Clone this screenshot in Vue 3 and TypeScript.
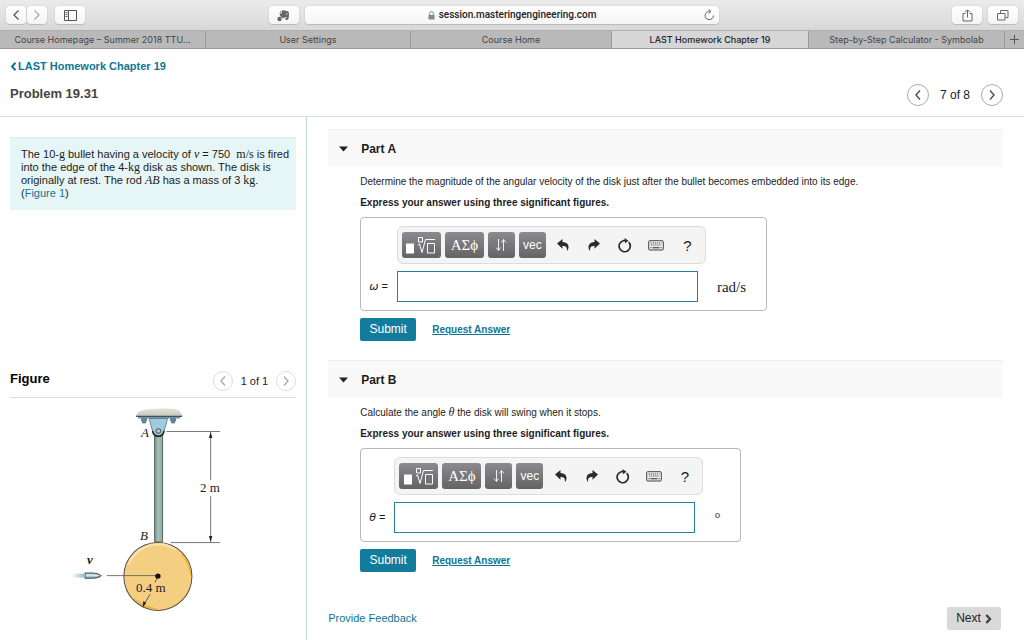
<script setup lang="ts">
import { ref } from 'vue'

interface Tab { title: string; share: number; active?: boolean }
interface Part {
  id: string
  title: string
  before: string
  symbol: string
  after: string
  variable: string
  unit: string
}

const tabs: Tab[] = [
  { title: 'Course Homepage – Summer 2018 TTU...', share: 206 },
  { title: 'User Settings', share: 205 },
  { title: 'Course Home', share: 201 },
  { title: 'LAST Homework Chapter 19', share: 197, active: true },
  { title: 'Step-by-Step Calculator - Symbolab', share: 196 },
]

const parts: Part[] = [
  {
    id: 'a',
    title: 'Part A',
    before: 'Determine the magnitude of the angular velocity of the disk just after the bullet becomes embedded into its edge.',
    symbol: '',
    after: '',
    variable: 'ω',
    unit: 'rad/s',
  },
  {
    id: 'b',
    title: 'Part B',
    before: 'Calculate the angle ',
    symbol: 'θ',
    after: ' the disk will swing when it stops.',
    variable: 'θ',
    unit: '°',
  },
]

const answers = ref<Record<string, string>>({ a: '', b: '' })
</script>

<template>
  <div class="window">
    <div class="toolbar">
      <div class="tools">
        <div class="pair">
          <button class="tool small" aria-label="Back">
            <svg width="8" height="12" viewBox="0 0 8 12"><path d="M6.500 1.500 2 6l4.500 4.500" fill="none" stroke="#555" stroke-width="1.300" /></svg>
          </button>
          <button class="tool small" aria-label="Forward">
            <svg width="8" height="12" viewBox="0 0 8 12"><path d="M1.500 1.500 6 6l-4.500 4.500" fill="none" stroke="#aaa" stroke-width="1.300" /></svg>
          </button>
        </div>
        <button class="tool" aria-label="Sidebar">
          <svg width="13" height="11" viewBox="0 0 13 11"><path d="M.5.5h12v10H.5zM4.500.5v10M1.500 2.500h2M1.500 4.500h2M1.500 6.500h2" fill="none" stroke="#555" /></svg>
        </button>
        <button class="tool clip" aria-label="Web clipper">
          <svg width="13" height="13" viewBox="0 0 13 13"><path d="M5 1.200h1.500c1 0 1.500.6 2.500.7 1.800 0 2.700.6 2.900 2 .2 2.100 0 4.700-.7 6.300-.4.9-2 1-2.700.4-.6-.6-.3-1.700.6-1.900l.9-.1c-.8-.7-1.600-.5-2.200-.4-.3.9-1 1.100-1.900.9C4 8.800 3 7 2.500 4.500L5 4.200z" fill="#666" /><path d="M4.300 1.500v2H2.400z" fill="#666" /><circle cx="9.700" cy="5" r=".7" fill="#f7f7f7" /><circle cx="2.500" cy="10" r="2.200" fill="#666" /></svg>
        </button>
      </div>
      <div class="address">
        <span class="host">
          <svg width="7" height="9" viewBox="0 0 7 9"><path d="M.5 4h6v4.500h-6z" fill="#888" /><path d="M1.600 4V2.500a1.900 1.900 0 0 1 3.800 0V4" fill="none" stroke="#888" /></svg>
          session.masteringengineering.com
        </span>
        <button class="reload" aria-label="Reload">
          <svg width="11" height="12" viewBox="0 0 11 12"><path d="M9.500 6.500A4.200 4.200 0 1 1 6 2.300M4.500 0l2.500 2.400-2.500 2.300" fill="none" stroke="#666" /></svg>
        </button>
      </div>
      <div class="tools end">
        <button class="tool" aria-label="Share">
          <svg width="11" height="13" viewBox="0 0 11 13"><path d="M3.500 4.500h-2.500v7.500h9V4.500H7.500M5.500 8.500V1M3 3.300 5.500.8 8 3.300" fill="none" stroke="#666" /></svg>
        </button>
        <button class="tool" aria-label="Show tabs">
          <svg width="12" height="11" viewBox="0 0 12 11"><path d="M3.500 3V.5h7.500v7H8.500M.5 3.500h7.500v6.500H.5z" fill="none" stroke="#666" /></svg>
        </button>
      </div>
    </div>

    <nav class="tabs" aria-label="Tabs">
      <button v-for="tab in tabs" :key="tab.title" class="tab" :class="{ active: tab.active }" :style="{ flexGrow: tab.share }">{{ tab.title }}</button>
      <button class="add" aria-label="New tab">
        <svg width="9" height="9" viewBox="0 0 9 9"><path d="M4.500 0v9M0 4.500h9" stroke="#555" /></svg>
      </button>
    </nav>

    <header class="head">
      <div>
        <a href="#" class="back"><svg width="7" height="9" viewBox="0 0 7 9"><path d="M5.500.8 2 4.500l3.500 3.700" fill="none" stroke="#0f7596" stroke-width="2" /></svg>LAST Homework Chapter 19</a>
        <h1>Problem 19.31</h1>
      </div>
      <div class="pager">
        <button class="round" aria-label="Previous problem"><svg width="8" height="12" viewBox="0 0 8 12"><path d="M6 1.500 2 6l4 4.500" fill="none" stroke="#555" stroke-width="1.500" /></svg></button>
        <span>7 of 8</span>
        <button class="round" aria-label="Next problem"><svg width="8" height="12" viewBox="0 0 8 12"><path d="M2 1.500 6 6l-4 4.500" fill="none" stroke="#555" stroke-width="1.500" /></svg></button>
      </div>
    </header>

    <div class="body">
      <aside class="side">
        <p class="problem">
          The 10-<span class="tex">g</span> bullet having a velocity of <i class="tex">v</i> = 750 &nbsp;<span class="tex">m/s</span> is fired<br>
          into the edge of the 4-<span class="tex">kg</span> disk as shown. The disk is<br>
          originally at rest. The rod <i class="tex">AB</i> has a mass of 3 <span class="tex">kg</span>.<br>
          (<a href="#figure">Figure 1</a>)
        </p>
        <section id="figure" class="figure">
          <div class="figure-head">
            <h2>Figure</h2>
            <div class="pager minor">
              <button class="round" disabled aria-label="Previous figure"><svg width="8" height="12" viewBox="0 0 8 12"><path d="M6 1.500 2 6l4 4.500" fill="none" stroke="#aaa" stroke-width="1.300" /></svg></button>
              <span>1 of 1</span>
              <button class="round" disabled aria-label="Next figure"><svg width="8" height="12" viewBox="0 0 8 12"><path d="M2 1.500 6 6l-4 4.500" fill="none" stroke="#aaa" stroke-width="1.300" /></svg></button>
            </div>
          </div>
          <svg class="drawing" viewBox="10 398 286 220" role="img" aria-label="Disk hanging from a rod, struck by a bullet">
            <defs>
              <linearGradient id="rod"><stop offset="0" stop-color="#77918a" /><stop offset=".45" stop-color="#a9c2b7" /><stop offset="1" stop-color="#8ba79c" /></linearGradient>
              <linearGradient id="trail"><stop offset="0" stop-color="#9cc9e0" stop-opacity="0" /><stop offset="1" stop-color="#8dbfda" /></linearGradient>
              <linearGradient id="slab" x2="0" y2="1"><stop offset="0" stop-color="#e4e3d7" /><stop offset="1" stop-color="#c9c8bb" /></linearGradient>
              <linearGradient id="shell" x2="0" y2="1"><stop offset="0" stop-color="#7ba0b1" /><stop offset=".4" stop-color="#e1eff5" /><stop offset="1" stop-color="#6e97aa" /></linearGradient>
            </defs>
            <path d="M136 416c1-4 4-5 8-6 10-2 26-2 33-.5 3 1 4 4 5.500 6.500z" fill="url(#slab)" />
            <path d="M141.500 418v3h1v2h3v-2h1v-3zM170.500 418v3h1v2h3v-2h1v-3z" fill="#5e8ba2" stroke="#3f5663" stroke-width=".6" />
            <path d="M138 416.500h42v2h-42z" fill="#7195a8" />
            <path d="M136 416.300h46" stroke="#45505a" stroke-width="1.200" />
            <path d="M154.500 434h8v108h-8z" fill="url(#rod)" stroke="#566962" />
            <path d="M149 418.500h18.500l-4 14.500c-1 5-9 5-10.500 0z" fill="#9fcbe0" stroke="#527080" stroke-width=".8" />
            <path d="M152.500 431c1.500 7 10 7 11.500 0" fill="none" stroke="#222" stroke-width="1.500" />
            <circle cx="158.300" cy="431" r="2.300" fill="#bccbd2" stroke="#53616a" />
            <circle cx="157.800" cy="576.300" r="34" fill="#f4cf82" stroke="#555044" />
            <path d="M128.500 564a32 32 0 0 1 47-14.500" fill="none" stroke="#fae3b0" stroke-width="2" />
            <path d="M134.500 598.500a32.800 32.800 0 0 0 23 10.500c-9-1.500-16-5-23-10.500zM181 553a33 33 0 0 1 9.500 22c-1-8-4-15-9.500-22z" fill="#ecb53c" stroke="#ecb53c" />
            <g fill="none" stroke="#555">
              <path d="M106.500 575.500H158M166.500 431.500H220M170.500 542.500H220M210.500 432v48M210.500 496v46" stroke-width=".8" />
              <path d="M157.500 576 155 582.500M150 594l-6.500 11" stroke-width=".9" />
            </g>
            <path d="m210.500 432-1.700 6h3.400zM210.500 542l-1.700-6h3.400zM142.500 607.500l.7-6.500 3 1.600z" fill="#222" />
            <circle cx="157.800" cy="576" r="2.700" fill="#111" />
            <path d="M71 573.500h13v4H71z" fill="url(#trail)" />
            <path d="M85 572.800h8c4 0 6.500 1.400 8 2.700-1.500 1.400-4 2.600-8 2.600h-8z" fill="url(#shell)" stroke="#415763" />
            <g class="caption">
              <text x="141" y="437" font-style="italic">A</text>
              <text x="140" y="540" font-style="italic">B</text>
              <text x="87" y="564" font-style="italic" font-weight="bold">v</text>
              <text x="200" y="492">2 m</text>
              <text x="136" y="592">0.4 m</text>
            </g>
          </svg>
        </section>
      </aside>

      <main class="main">
        <section v-for="part in parts" :key="part.id" class="part">
          <h2 class="part-head">
            <svg width="9" height="6" viewBox="0 0 9 6"><path d="M0 .5h9L4.500 5.500z" fill="#222" /></svg>
            {{ part.title }}
          </h2>
          <div class="part-body">
            <p>{{ part.before }}<i v-if="part.symbol" class="tex">{{ part.symbol }}</i>{{ part.after }}</p>
            <p class="strong">Express your answer using three significant figures.</p>
            <div class="answer">
              <div class="editor">
                <button class="key wide" aria-label="Templates">
                  <svg width="32" height="18" viewBox="0 0 32 18"><path d="M1 7.500h8v10H1z" fill="#fff" /><path d="M13.500 1.500h4v4.500h-4zM22.500 7.500h7v9.500h-7zM13 9l1.500-1 2.500 8.500L20.500 3.500H30" fill="none" stroke="#fff" /></svg>
                </button>
                <button class="key wide greek">ΑΣϕ</button>
                <button class="key" aria-label="Subscript and superscript">
                  <svg width="12" height="14" viewBox="0 0 12 14"><path d="M3.500 1v11.500M1 9.500l2.500 3 2-3M8.500 13V1.500M6.500 4.500l2-3 2.500 3" fill="none" stroke="#eee" /></svg>
                </button>
                <button class="key">vec</button>
                <button class="act" aria-label="Undo">
                  <svg width="12" height="12" viewBox="0 0 12 12"><path d="M0 4.500 5.500 0v3c4 .2 6 2.200 6 5.200 0 1.500-.5 2.800-1.700 3.800.6-3.400-.6-5-4.300-5.200v3z" fill="#2b2b2b" /></svg>
                </button>
                <button class="act" aria-label="Redo">
                  <svg width="12" height="12" viewBox="0 0 12 12"><path d="M12 4.500 6.500 0v3c-4 .2-6 2.200-6 5.200 0 1.500.5 2.800 1.700 3.800-.6-3.400.6-5 4.300-5.200v3z" fill="#2b2b2b" /></svg>
                </button>
                <button class="act" aria-label="Reset">
                  <svg width="14" height="15" viewBox="0 0 14 15"><path d="M10.700 4.200a5.600 5.600 0 1 1-5.400-1.500l2-.2" fill="none" stroke="#2b2b2b" stroke-width="1.700" /><path d="M6.500 0 10.500 2.700 7 5.300z" fill="#2b2b2b" /></svg>
                </button>
                <button class="act" aria-label="Keyboard">
                  <svg width="16" height="11" viewBox="0 0 16 11"><rect x=".7" y=".7" width="14.600" height="9.300" rx="1" fill="#eee" stroke="#444" /><path d="M2.500 3h11M3 5h10.500" stroke="#555" stroke-dasharray="1.300 .8" /><path d="M4.500 7.700h7" stroke="#555" stroke-width="1.300" /><path d="M2.300 7.700h1.300M12.400 7.700h1.300" stroke="#555" /></svg>
                </button>
                <button class="act" aria-label="Help">?</button>
              </div>
              <label :for="'answer-' + part.id"><i>{{ part.variable }}</i> =</label>
              <input :id="'answer-' + part.id" v-model="answers[part.id]" type="text">
              <span class="unit" :class="{ degree: part.unit === '°' }">{{ part.unit }}</span>
            </div>
            <div class="actions">
              <button class="submit">Submit</button>
              <a href="#">Request Answer</a>
            </div>
          </div>
        </section>
        <footer class="foot">
          <a href="#">Provide Feedback</a>
          <button class="next">Next <svg width="7" height="10" viewBox="0 0 7 10"><path d="M1.300 1 5 5 1.300 9" fill="none" stroke="#444" stroke-width="2.400" /></svg></button>
        </footer>
      </main>
    </div>
  </div>
</template>

<style>
body { margin: 0; }
</style>

<style scoped>
* { box-sizing: border-box; }
button { font: inherit; color: inherit; padding: 0; margin: 0; border: 0; background: none; display: flex; align-items: center; justify-content: center; }
svg { flex: none; }
a { color: #0f7596; text-decoration: none; }
h1, h2, p { margin: 0; }
.window { min-height: 100vh; display: flex; flex-direction: column; background: #fff; color: #1c1c1c; font: 10px/13px "Liberation Sans", Arial, sans-serif; }

.toolbar { display: flex; align-items: center; gap: 6px; height: 30px; padding: 0 6px; background: linear-gradient(#ebebeb, #d8d8d8); }
.tools { flex: 1; display: flex; gap: 8px; }
.tools.end { justify-content: flex-end; gap: 6px; }
.pair { display: flex; gap: 1px; }
.tool { width: 30px; height: 18px; border-radius: 4px; background: linear-gradient(#fff, #f4f4f4); box-shadow: 0 0 1px #aaa, 0 1px 1px #bbb; }
.tool.small { width: 20px; }
.clip { margin-left: auto; }
.address { flex: 0 0 41%; height: 18px; display: flex; align-items: center; border-radius: 4px; background: linear-gradient(#fff, #f5f5f5); box-shadow: 0 0 1px #aaa, 0 1px 1px #bbb; font: 10px/18px Roboto, sans-serif; font-weight: 500; color: #222; }
.host { flex: 1; display: flex; align-items: center; justify-content: center; gap: 4px; padding-left: 20px; }
.reload { width: 20px; height: 18px; }

.tabs { display: flex; height: 19px; border-top: 1px solid #b0b0b0; border-bottom: 1px solid #989898; background: #b9b9b9; font: 9px/17px Inter, sans-serif; color: #444; }
.tab { flex: 1 1 0; min-width: 0; white-space: nowrap; border-right: 1px solid #999; }
.tab.active { background: #d6d6d6; color: #222; font-weight: 500; }
.add { width: 19px; }

.head { display: flex; justify-content: space-between; align-items: flex-end; padding: 9px 21px 10px 10px; border-bottom: 1px solid #ddd; }
.back { display: flex; align-items: center; gap: 1px; font-size: 11px; line-height: 16px; font-weight: bold; }
h1 { margin: 12px 0 4px; font-size: 13px; line-height: 16px; color: #444; }
.pager { display: flex; align-items: center; gap: 11px; font-size: 12px; line-height: 22px; }
.round { width: 22px; height: 22px; border: 1px solid #aaa; border-radius: 50%; background: #fff; }
.minor { gap: 8px; font-size: 11px; line-height: 20px; }
.minor .round { width: 20px; height: 20px; border-color: #ddd; }

.body { flex: 1; display: flex; }
.side { flex: 0 0 30%; min-width: 307px; padding: 20px 10px 0; border-right: 1px solid #c3d3e2; }
.problem { padding: 10px 10px 10px 11px; border-top: 1px solid #dde9e9; background: #e6f5f6; white-space: nowrap; font-size: 11px; }
.tex { font-family: "Liberation Serif", serif; font-size: 12px; line-height: 0; }
.figure { margin-top: 161px; }
.figure-head { display: flex; justify-content: space-between; padding-bottom: 6px; border-bottom: 1px solid #ddd; }
.figure-head h2 { font-size: 13px; line-height: 16px; color: #000; }
.drawing { display: block; width: 100%; }
.caption { font: 13px "Liberation Serif", serif; fill: #222; }

.main { flex: 1; min-width: 0; padding: 12px 21px 10px; }
.part { margin-bottom: 19px; }
.part-head { display: flex; align-items: center; gap: 13px; height: 38px; padding-left: 11px; border-top: 1px solid #eee; background: #f9f9f9; font-size: 12px; line-height: 16px; }
.part-body { padding: 8px 0 0 32px; }
.part-body p { line-height: 13px; margin-bottom: 8px; }
.part-body .strong { font-weight: bold; }
.answer { display: inline-grid; grid-template-columns: auto 301px auto; align-items: center; row-gap: 7px; padding: 8px 20px 8px 8px; border: 1px solid #b8b8b8; border-radius: 4px; vertical-align: top; }
.editor { grid-column: 2 / 4; justify-self: start; display: flex; align-items: center; gap: 4px; height: 38px; padding: 0 4px; border: 1px solid #dcdcdc; border-radius: 6px; background: #f4f4f4; }
.key { width: 27px; height: 26px; border-radius: 3px; background: linear-gradient(#8b8a90, #646464); color: #fff; font-size: 12px; line-height: 14px; }
.key.wide { width: 39px; }
.greek { font-family: "Liberation Serif", serif; font-size: 15px; }
.act { width: 27px; height: 26px; font-size: 15px; }
.answer label { grid-column: 1; padding-right: 9px; font-size: 11px; }
.answer label i { font-family: "DejaVu Sans", sans-serif; }
.answer input { width: 100%; height: 31px; padding: 0 8px; border: 1px solid #2482a0; border-radius: 0; background: #fff; font: inherit; outline: 0; }
.unit { padding-left: 19px; font: 15px/18px "Liberation Serif", serif; }
.unit.degree { line-height: 12px; }
.actions { display: flex; align-items: center; gap: 16px; margin-top: 7px; font-weight: bold; }
.actions a { text-decoration: underline; }
.submit { width: 56px; height: 23px; border-radius: 2px; background: #137b9b; color: #fff; font-size: 12px; font-weight: normal; }
.foot { display: flex; align-items: center; justify-content: space-between; padding: 16px 2px 0 0; font-size: 11px; }
.next { gap: 4px; width: 54px; height: 23px; border-radius: 2px; background: #d9d9d9; font-size: 12px; }
</style>
